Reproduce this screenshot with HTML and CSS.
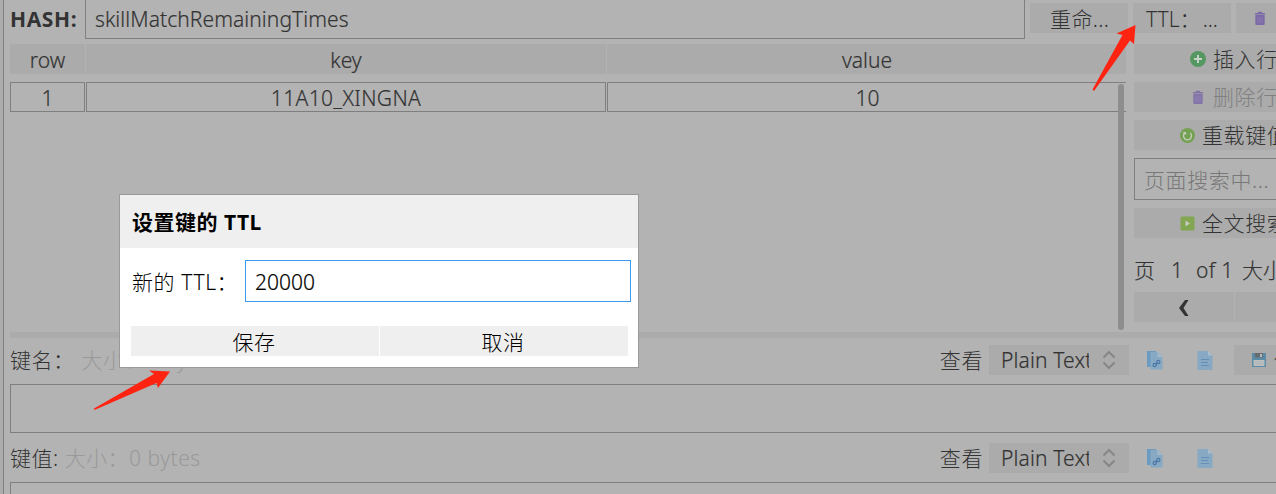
FILE: index.html
```html
<!DOCTYPE html>
<html lang="zh-CN">
<head>
<meta charset="utf-8">
<title>设置键的 TTL</title>
<link rel="stylesheet" href="styles.css">
</head>
<body>
<svg class="defs" width="0" height="0">
  <defs>
    <symbol id="trash" viewBox="0 0 12 16"><path d="M1 4h10v9.700q0 1.300-1.300 1.300H2.300q-1.300 0-1.300-1.300zM.5 2h3l.6-1.200h3.800L8.500 2h3v1.500H.5z" fill="#7c6aa8"/><path d="M3.800 6v7M6 6v7M8.200 6v7" stroke="#9488b4" stroke-width=".7"/></symbol>
    <symbol id="updown" viewBox="0 0 14 20"><path d="M1.500 7.500 7 2l5.500 5.500M1.500 12.500 7 18l5.500-5.500" fill="none" stroke="#868686" stroke-width="2"/></symbol>
    <symbol id="copy" viewBox="0 0 16 19"><path d="M0 0h9v2H5v14H0z" fill="#6b9bc1"/><path d="M3.500 1H11l4.500 4.500V18.500h-12z" fill="#88a9c4"/><path d="M10.500 1l5 5h-5z" fill="#a4bacb"/><g fill="none" stroke="#4c79a8" stroke-width="1.200"><circle cx="7.700" cy="14" r="1.600"/><circle cx="11.300" cy="11" r="1.600"/><path d="M8.500 13.500l2-2"/></g></symbol>
    <symbol id="doc" viewBox="0 0 16 19"><path d="M.5 0H11l4.500 4.500V19H.5z" fill="#88a9c4"/><path d="M11 0v4.500h4.500z" fill="#a8bdcd"/><path d="M4 8.500h8M4 11.500h7M4 14.500h8" stroke="#638fb9" stroke-width="1.200"/></symbol>
  </defs>
</svg>
<div class="app">
  <div class="rail"></div>
  <main class="main">
    <div class="keybar">
      <b class="type">HASH:</b>
      <div class="keyname">skillMatchRemainingTimes</div>
      <div class="btn rename">重命...</div>
      <div class="btn ttl"><span>TTL：</span><span>...</span></div>
      <div class="btn delete"><svg class="bin"><use href="#trash"/></svg></div>
    </div>
    <div class="content">
      <div class="table">
        <div class="tr head"><div>row</div><div>key</div><div>value</div></div>
        <div class="tr cells"><div>1</div><div><span class="hashkey">11A10_XINGNA</span></div><div>10</div></div>
        <div class="scroll"></div>
      </div>
      <aside class="side">
        <div class="btn act insert"><svg class="round" viewBox="0 0 16 16"><circle cx="8" cy="8" r="8" fill="#559760"/><path d="M8 4v8M4 8h8" stroke="#c6d3c8" stroke-width="2"/></svg>插入行</div>
        <div class="btn act insert off"><svg class="bin"><use href="#trash"/></svg>删除行</div>
        <div class="btn act"><svg class="reload" viewBox="0 0 15 15"><circle cx="7.500" cy="7.500" r="7.500" fill="#74a052"/><path d="M4.700 5a4 4 0 1 0 5.600 0M3.300 4.600h2.200v2" fill="none" stroke="#c2cdb9" stroke-width="1.400"/></svg>重载键值</div>
        <div class="search">页面搜索中...</div>
        <div class="btn act"><svg class="reload" viewBox="0 0 15 15"><rect x=".5" y=".5" width="14" height="14" rx="1.500" fill="#82a652"/><path d="M5.500 4.500v6l4.500-3z" fill="#c5ccbc"/></svg>全文搜索</div>
        <div class="page"><span class="p1">页</span><span class="p2">1</span><span class="p3">of 1</span><span>大小</span></div>
        <div class="pager"><div class="btn"><svg class="prev" viewBox="0 0 10 16"><path d="M9.500 0H6L0 8l6 8h3.500L4.500 8z" fill="#333"/></svg></div><div class="btn"></div></div>
      </aside>
    </div>
    <div class="splitter"></div>
    <div class="field">
      <span class="label">键名：</span><span class="size first">大小：0 bytes</span>
      <span class="view">查看</span><div class="select"><span>Plain Text</span><svg><use href="#updown"/></svg></div>
      <svg class="file copy"><use href="#copy"/></svg><svg class="file"><use href="#doc"/></svg>
      <div class="btn save"><svg viewBox="0 0 14 14"><path d="M0 0h14v14H0z" fill="#5b8ba7"/><path d="M3 0h8v4.500H3z" fill="#686b6d"/><path d="M8 1h2v3H8z" fill="#b5babd"/><path d="M1.500 7h11v6h-11z" fill="#bdc1c2"/><path d="M2.500 9h9M2.500 11h9" stroke="#aaa" stroke-width=".6"/></svg><span>保存</span></div>
    </div>
    <div class="editor"></div>
    <div class="field second">
      <span class="label">键值:</span><span class="size">大小：0 bytes</span>
      <span class="view">查看</span><div class="select"><span>Plain Text</span><svg><use href="#updown"/></svg></div>
      <svg class="file copy"><use href="#copy"/></svg><svg class="file"><use href="#doc"/></svg>
      <div class="gap"></div>
    </div>
    <div class="editor last"></div>
  </main>
  <div class="dialog">
    <div class="title">设置键的 TTL</div>
    <div class="form"><span>新的 TTL：</span><div class="input">20000</div></div>
    <div class="actions"><div>保存</div><div>取消</div></div>
  </div>
  <svg class="arrows" viewBox="0 0 1276 494" fill="#ff2412"><path d="M1135.500 25 1116.500 33.500 1122.500 35 1092.500 89.500 1094 91 1130 40.500 1134 44z"/><path d="M170 371.500 149 370.500 154 374 94 408.500 94.500 410 156.500 383 158 388z"/></svg>
</div>
</body>
</html>
```
FILE: styles.css
```css
* { box-sizing: border-box; }
body { margin: 0; overflow: hidden; background: #b3b3b3; color: #333; font: 300 21px/30px "Noto Sans", "Noto Sans CJK SC", sans-serif; }
.defs { position: absolute; }
svg { display: block; flex: none; }
.app { position: relative; display: flex; width: 1276px; height: 494px; overflow: hidden; white-space: nowrap; }
.rail { flex: none; width: 4px; border-right: 1px solid #7f7f7f; background: #adadad; }
.main { flex: none; width: 1272px; padding-left: 6px; overflow: hidden; }
.btn { background: #ababab; height: 30px; flex: none; }
.keybar { display: flex; height: 39px; }
.keybar > * { flex: none; }
.type { width: 75px; padding-top: 4px; font-weight: 700; letter-spacing: .6px; }
.keyname { width: 940px; height: 39px; padding: 4px 9px; border: 1px solid #7f7f7f; border-top: 0; letter-spacing: .07px; }
.keyname, .hashkey, .head, .cells, .select span, .input, .page { -webkit-text-stroke: .2px currentColor; }
.rename, .ttl { width: 98px; margin: 3px 0 0 5px; line-height: 33px; }
.rename { padding-left: 20px; letter-spacing: .4px; }
.ttl { display: flex; justify-content: space-between; padding: 0 13px 0 13px; }
.ttl span:first-child { width: 50px; }
.delete { width: 60px; margin: 3px 0 0 5px; padding: 8px 0 0 18px; }
.bin { width: 12px; height: 15px; }
.content { display: flex; height: 288px; margin-top: 5px; }
.table { position: relative; width: 1116px; height: 288px; overflow: hidden; flex: none; }
.tr { display: grid; grid-template: 30px / 75px 520px 520px; gap: 1px; height: 30px; text-align: center; line-height: 32px; }
.head div { background: #ababab; }
.cells { margin-top: 8px; line-height: 30px; }
.cells div { border: 1px solid #7f7f7f; }
.cells div:last-child { border-right: 0; }
.hashkey { letter-spacing: .35px; }
.scroll { position: absolute; right: 2px; top: 40px; width: 6px; height: 246px; border-radius: 3px; background: #8e8e8e; }
.side { flex: none; width: 200px; margin-left: 8px; }
.act { display: flex; align-items: center; gap: 7px; margin-bottom: 8px; padding-left: 46px; line-height: 32px; letter-spacing: .6px; }
.insert { padding-left: 56px; gap: 7px; }
.off { color: #808080; padding-left: 58px; gap: 9px; }
.off svg { opacity: .85; }
.round { width: 16px; height: 16px; }
.reload { width: 15px; height: 15px; }
.search { height: 42px; margin-bottom: 8px; padding-left: 9px; border: 1px solid #7f7f7f; color: #777; line-height: 42px; letter-spacing: .6px; }
.page { display: flex; height: 30px; margin: 16px 0 8px; line-height: 32px; }
.p1 { width: 37px; }
.p2 { width: 25px; }
.p3 { width: 46px; letter-spacing: .3px; }
.pager { display: flex; gap: 1px; }
.pager .btn { width: 100px; padding: 8px 0 0 45px; }
.prev { width: 10px; height: 16px; }
.splitter { height: 6px; background: #ababab; }
.field { display: flex; align-items: center; height: 46px; padding-bottom: 2px; }
.field > * { flex: none; }
.label { letter-spacing: .5px; line-height: 32px; }
.size { color: #999; margin-left: 6px; letter-spacing: .5px; }
.first { margin-left: 7px; }
.view { margin-left: auto; margin-right: 6px; letter-spacing: .6px; line-height: 32px; }
.select { display: flex; align-items: center; width: 140px; height: 30px; padding-left: 12px; background: #ababab; }
.select span { width: 88px; overflow: hidden; line-height: 33px; letter-spacing: .15px; }
.select svg { width: 14px; height: 20px; margin-left: 13px; }
.file { width: 16px; height: 19px; margin-left: 34px; }
.copy { margin-left: 18px; }
.save { display: flex; align-items: center; width: 42px; padding-left: 18px; margin-left: 21px; overflow: hidden; gap: 8px; }
.save svg { width: 14px; height: 14px; }
.gap { width: 63px; }
.editor { width: 1290px; height: 49px; border: 1px solid #7f7f7f; }
.second { height: 49px; padding: 1px 0 0; }
.dialog { position: absolute; left: 119px; top: 194px; width: 520px; height: 174px; border: 1px solid #999; background: #fff; color: #000; }
.title { height: 53px; padding-left: 12px; background: #efefef; font-weight: 700; line-height: 54px; letter-spacing: .5px; }
.form { display: flex; height: 42px; margin-top: 12px; padding-left: 12px; line-height: 43px; }
.form span { width: 113px; letter-spacing: .6px; line-height: 45px; }
.input { width: 386px; height: 42px; padding-left: 9px; border: 1px solid #3d99f0; }
.actions { display: grid; grid-template-columns: 248px 248px; gap: 1px; margin: 24px 0 0 11px; text-align: center; line-height: 32px; letter-spacing: .6px; }
.actions div { height: 30px; padding-right: 2px; background: #efefef; }
.arrows { position: absolute; left: 0; top: 0; width: 1276px; height: 494px; }
```
